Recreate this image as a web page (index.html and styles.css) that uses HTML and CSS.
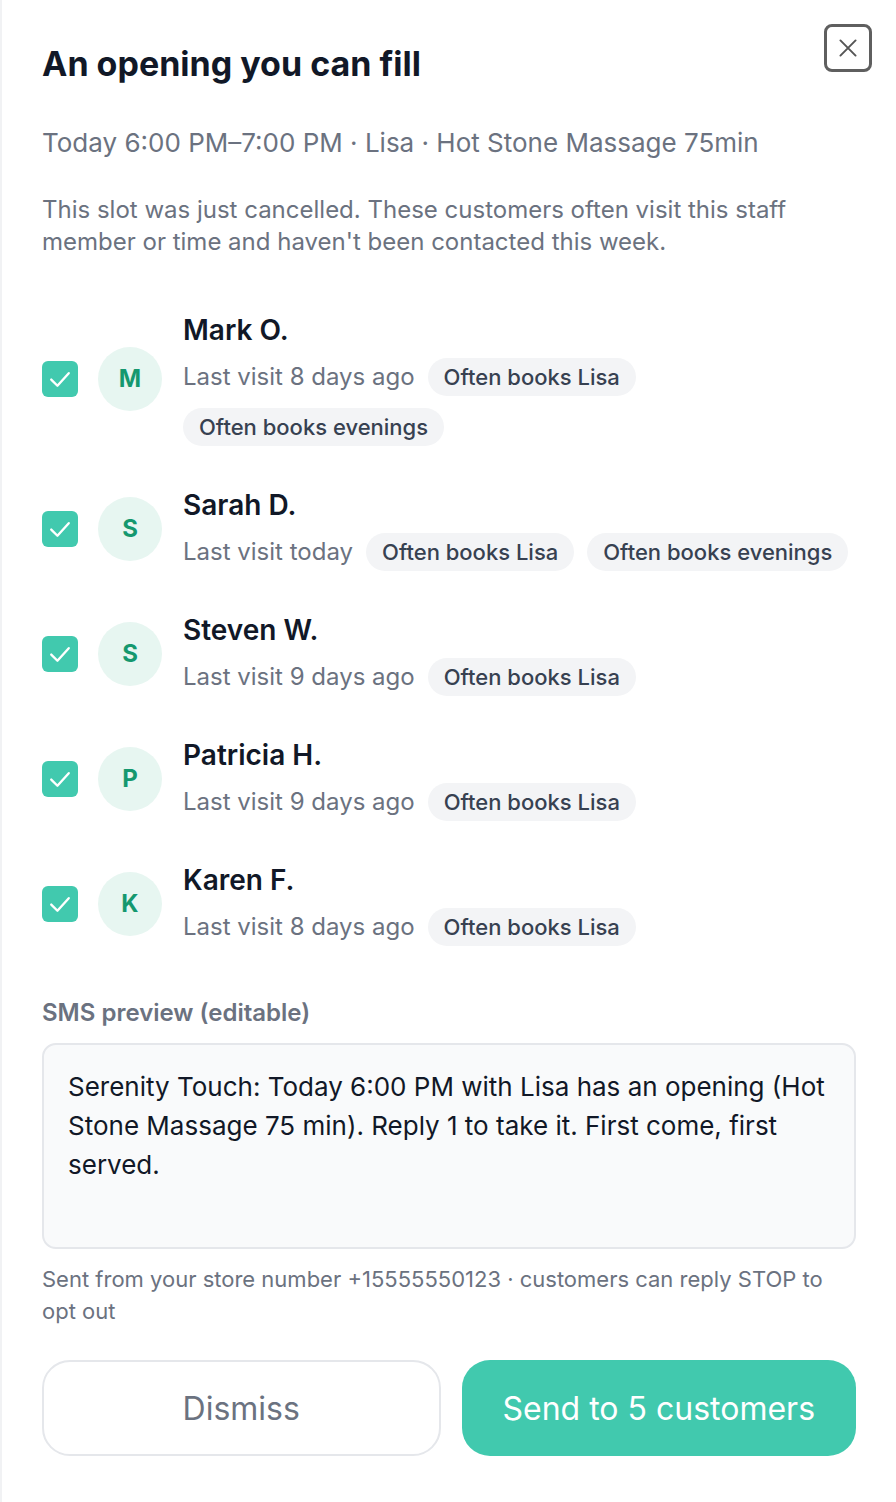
FILE: index.html
```html
<!DOCTYPE html>
<html lang="en">
<head>
<meta charset="utf-8">
<title>An opening you can fill</title>
<link rel="stylesheet" href="styles.css">
</head>
<body>
<div class="panel">
  <button class="close" aria-label="Close">
    <svg viewBox="0 0 24 24" width="26" height="26"><path d="M5 5L19 19M19 5L5 19" stroke="#555" stroke-width="1.8" fill="none" stroke-linecap="round"/></svg>
  </button>
  <h1 class="title">An opening you can fill</h1>
  <p class="subtitle">Today 6:00 PM–7:00 PM · Lisa · Hot Stone Massage 75min</p>
  <p class="desc">This slot was just cancelled. These customers often visit this staff member or time and haven't been contacted this week.</p>

  <ul class="list">
    <li class="row">
      <span class="check"><svg viewBox="0 0 24 24" width="28" height="28"><path d="M4.5 12.5L9.8 17.8L19.5 7" stroke="#fff" stroke-width="2" fill="none" stroke-linecap="round" stroke-linejoin="round"/></svg></span>
      <span class="avatar">M</span>
      <div class="info">
        <div class="name">Mark O.</div>
        <div class="meta"><span class="last">Last visit 8 days ago</span><span class="tag">Often books Lisa</span><span class="tag">Often books evenings</span></div>
      </div>
    </li>
    <li class="row">
      <span class="check"><svg viewBox="0 0 24 24" width="28" height="28"><path d="M4.5 12.5L9.8 17.8L19.5 7" stroke="#fff" stroke-width="2" fill="none" stroke-linecap="round" stroke-linejoin="round"/></svg></span>
      <span class="avatar">S</span>
      <div class="info">
        <div class="name">Sarah D.</div>
        <div class="meta"><span class="last">Last visit today</span><span class="tag">Often books Lisa</span><span class="tag">Often books evenings</span></div>
      </div>
    </li>
    <li class="row">
      <span class="check"><svg viewBox="0 0 24 24" width="28" height="28"><path d="M4.5 12.5L9.8 17.8L19.5 7" stroke="#fff" stroke-width="2" fill="none" stroke-linecap="round" stroke-linejoin="round"/></svg></span>
      <span class="avatar">S</span>
      <div class="info">
        <div class="name">Steven W.</div>
        <div class="meta"><span class="last">Last visit 9 days ago</span><span class="tag">Often books Lisa</span></div>
      </div>
    </li>
    <li class="row">
      <span class="check"><svg viewBox="0 0 24 24" width="28" height="28"><path d="M4.5 12.5L9.8 17.8L19.5 7" stroke="#fff" stroke-width="2" fill="none" stroke-linecap="round" stroke-linejoin="round"/></svg></span>
      <span class="avatar">P</span>
      <div class="info">
        <div class="name">Patricia H.</div>
        <div class="meta"><span class="last">Last visit 9 days ago</span><span class="tag">Often books Lisa</span></div>
      </div>
    </li>
    <li class="row">
      <span class="check"><svg viewBox="0 0 24 24" width="28" height="28"><path d="M4.5 12.5L9.8 17.8L19.5 7" stroke="#fff" stroke-width="2" fill="none" stroke-linecap="round" stroke-linejoin="round"/></svg></span>
      <span class="avatar">K</span>
      <div class="info">
        <div class="name">Karen F.</div>
        <div class="meta"><span class="last">Last visit 8 days ago</span><span class="tag">Often books Lisa</span></div>
      </div>
    </li>
  </ul>

  <div class="sms-label">SMS preview (editable)</div>
  <div class="sms-box">Serenity Touch: Today 6:00 PM with Lisa has an opening (Hot Stone Massage 75 min). Reply 1 to take it. First come, first served.</div>
  <p class="hint">Sent from your store number +15555550123 · customers can reply STOP to opt out</p>

  <div class="actions">
    <button class="btn btn-secondary">Dismiss</button>
    <button class="btn btn-primary">Send to 5 customers</button>
  </div>
</div>
</body>
</html>
```

FILE: styles.css
```css
* { box-sizing: border-box; }
html, body { margin: 0; padding: 0; background: #fff; }
body {
  font-family: Inter, "Noto Sans", "Liberation Sans", sans-serif;
  color: #111827;
}
.panel {
  position: relative;
  min-height: 1502px;
  padding: 44px 40px 40px 40px;
  border-left: 2px solid #f1f2f4;
}
.close {
  position: absolute;
  top: 24px;
  right: 24px;
  width: 48px;
  height: 48px;
  border: 3px solid #5f5f5f;
  border-radius: 8px;
  background: #fff;
  display: flex;
  align-items: center;
  justify-content: center;
  padding: 0;
}
.title {
  margin: 0;
  font-size: 34px;
  line-height: 40px;
  font-weight: 700;
  color: #111827;
}
.subtitle {
  margin: 41px 0 0;
  font-size: 26px;
  line-height: 36px;
  color: #6b7280;
}
.desc {
  margin: 33px 0 0;
  font-size: 24px;
  line-height: 32px;
  color: #6b7280;
}
.list {
  list-style: none;
  margin: 53px 0 0;
  padding: 0;
  display: flex;
  flex-direction: column;
  gap: 40px;
}
.row {
  display: flex;
  align-items: center;
}
.check {
  flex: none;
  width: 36px;
  height: 36px;
  border-radius: 6px;
  background: #41c9ae;
  display: flex;
  align-items: center;
  justify-content: center;
}
.avatar {
  flex: none;
  width: 64px;
  height: 64px;
  border-radius: 50%;
  background: #e7f6f1;
  color: #15986f;
  font-weight: 700;
  font-size: 24px;
  display: flex;
  align-items: center;
  justify-content: center;
  margin-left: 20px;
}
.info {
  margin-left: 21px;
  display: flex;
  flex-direction: column;
  gap: 9px;
  min-width: 0;
}
.name {
  font-size: 28px;
  line-height: 38px;
  font-weight: 600;
  color: #111827;
}
.meta {
  display: flex;
  flex-wrap: wrap;
  align-items: center;
  column-gap: 13px;
  row-gap: 12px;
}
.last {
  font-size: 24px;
  line-height: 38px;
  color: #6b7280;
}
.tag {
  display: inline-flex;
  align-items: center;
  height: 38px;
  padding: 0 16px;
  border-radius: 19px;
  background: #f3f4f6;
  color: #374151;
  font-size: 22px;
  font-weight: 500;
}
.sms-label {
  margin-top: 52px;
  font-size: 24px;
  line-height: 30px;
  font-weight: 600;
  color: #6b7280;
}
.sms-box {
  margin-top: 15px;
  min-height: 206px;
  border: 2px solid #e5e7eb;
  border-radius: 14px;
  background: #f9fafb;
  padding: 22px 24px;
  font-size: 26px;
  line-height: 39px;
  color: #111827;
}
.hint {
  margin: 14px 0 0;
  font-size: 22px;
  line-height: 32px;
  color: #6b7280;
}
.actions {
  margin-top: 33px;
  display: flex;
  gap: 21px;
}
.btn {
  flex: 1;
  height: 96px;
  border-radius: 28px;
  font-family: inherit;
  font-size: 32px;
  font-weight: 400;
  cursor: pointer;
}
.btn-secondary {
  background: #fff;
  border: 2px solid #e5e7eb;
  color: #6b7280;
}
.btn-primary {
  background: #41c9ae;
  border: none;
  color: #fff;
}
```
